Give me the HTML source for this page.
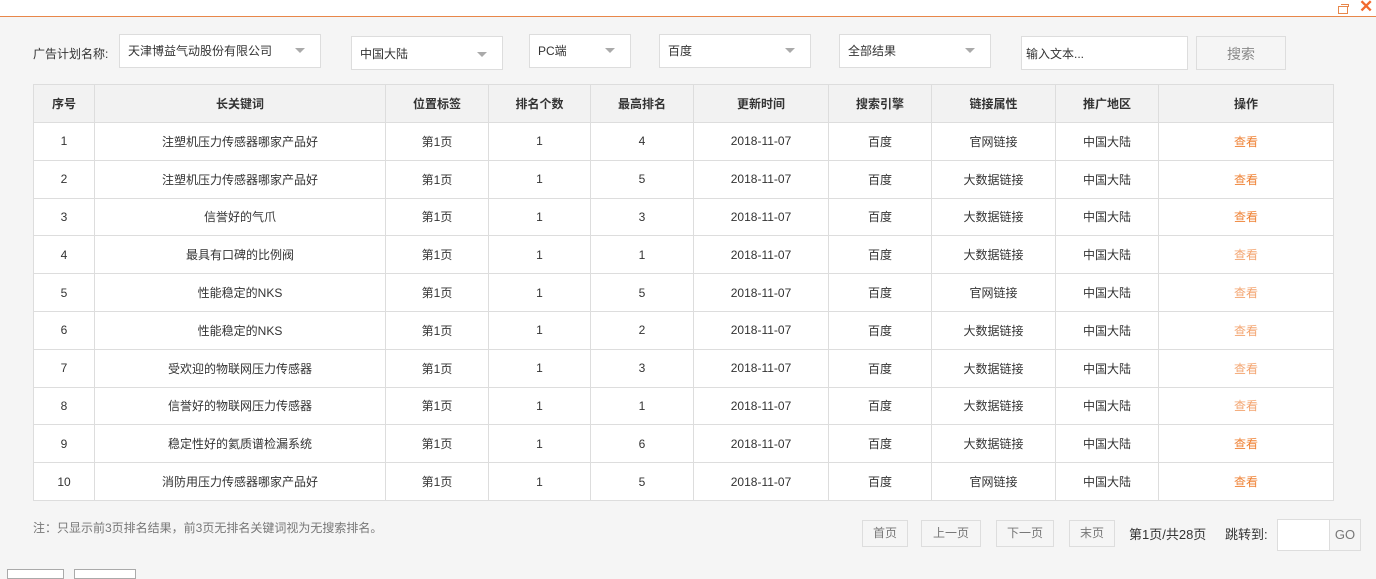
<!DOCTYPE html>
<html><head><meta charset="utf-8">
<style>
*{box-sizing:border-box;margin:0;padding:0}
body{width:1376px;height:572px;overflow:hidden;background:#f5f5f5;font-family:"Liberation Sans","Noto Sans CJK SC",sans-serif;font-size:12px;color:#333;position:relative}
.top{position:absolute;left:0;top:0;width:1376px;height:17px;background:#fff;border-bottom:1px solid #e8874a}
.ab{position:absolute}
.sel{position:absolute;background:#fff;border:1px solid #ddd;height:34px;line-height:30px;padding-left:8px;font-size:12px;color:#333}
.sel .tri{position:absolute;right:15px;top:14px;width:0;height:0;border-left:5px solid transparent;border-right:5px solid transparent;border-top:5px solid #aaa}
table{position:absolute;left:33px;top:84px;border-collapse:collapse;background:#fff;table-layout:fixed}
td,th{border:1px solid #ddd;text-align:center;height:37.8px;font-size:12px;color:#333;font-weight:normal}
th{background:#f2f2f2;font-weight:bold;height:38px}
.o{color:#ef8235}.l{color:#f3a571}
.btn{position:absolute;top:520px;height:27px;line-height:25px;border:1px solid #ddd;background:#f5f5f5;color:#777;text-align:center;font-size:12px}
</style></head><body>
<div class="top"></div>
<div class="ab" style="left:1338px;top:6px;width:10px;height:8px;border:1.5px solid #e8874a"></div>
<div class="ab" style="left:1341px;top:4px;width:8px;height:3px;border-top:1.5px solid #e8874a;border-right:1.5px solid #e8874a"></div>
<div class="ab" style="left:1359px;top:-3px;color:#f26a2e;font-size:17px;font-weight:bold">✕</div>
<div class="ab" style="left:33px;top:45px">广告计划名称:</div>
<div class="sel" style="left:119px;top:34px;width:202px;line-height:32px">天津博益气动股份有限公司<span class="tri" style="top:13px"></span></div>
<div class="sel" style="left:351px;top:36px;width:152px;line-height:34px">中国大陆<span class="tri" style="top:15px"></span></div>
<div class="sel" style="left:529px;top:34px;width:102px;line-height:32px">PC端<span class="tri" style="top:13px"></span></div>
<div class="sel" style="left:659px;top:34px;width:152px;line-height:32px">百度<span class="tri" style="top:13px"></span></div>
<div class="sel" style="left:839px;top:34px;width:152px;line-height:32px">全部结果<span class="tri" style="top:13px"></span></div>
<div class="sel" style="left:1021px;top:36px;width:167px;height:34px;padding-left:4px;line-height:34px">输入文本...</div>
<div class="ab" style="left:1196px;top:36px;width:90px;height:34px;border:1px solid #ddd;background:#f5f5f5;color:#888;font-size:14px;text-align:center;line-height:34px">搜索</div>
<table>
<colgroup><col style="width:61px"><col style="width:291px"><col style="width:103px"><col style="width:102px"><col style="width:103px"><col style="width:135px"><col style="width:103px"><col style="width:124px"><col style="width:103px"><col style="width:175px"></colgroup>
<tr><th>序号</th><th>长关键词</th><th>位置标签</th><th>排名个数</th><th>最高排名</th><th>更新时间</th><th>搜索引擎</th><th>链接属性</th><th>推广地区</th><th>操作</th></tr>
<tr><td>1</td><td>注塑机压力传感器哪家产品好</td><td>第1页</td><td>1</td><td>4</td><td>2018-11-07</td><td>百度</td><td>官网链接</td><td>中国大陆</td><td class="o">查看</td></tr>
<tr><td>2</td><td>注塑机压力传感器哪家产品好</td><td>第1页</td><td>1</td><td>5</td><td>2018-11-07</td><td>百度</td><td>大数据链接</td><td>中国大陆</td><td class="o">查看</td></tr>
<tr><td>3</td><td>信誉好的气爪</td><td>第1页</td><td>1</td><td>3</td><td>2018-11-07</td><td>百度</td><td>大数据链接</td><td>中国大陆</td><td class="o">查看</td></tr>
<tr><td>4</td><td>最具有口碑的比例阀</td><td>第1页</td><td>1</td><td>1</td><td>2018-11-07</td><td>百度</td><td>大数据链接</td><td>中国大陆</td><td class="l">查看</td></tr>
<tr><td>5</td><td>性能稳定的NKS</td><td>第1页</td><td>1</td><td>5</td><td>2018-11-07</td><td>百度</td><td>官网链接</td><td>中国大陆</td><td class="l">查看</td></tr>
<tr><td>6</td><td>性能稳定的NKS</td><td>第1页</td><td>1</td><td>2</td><td>2018-11-07</td><td>百度</td><td>大数据链接</td><td>中国大陆</td><td class="l">查看</td></tr>
<tr><td>7</td><td>受欢迎的物联网压力传感器</td><td>第1页</td><td>1</td><td>3</td><td>2018-11-07</td><td>百度</td><td>大数据链接</td><td>中国大陆</td><td class="l">查看</td></tr>
<tr><td>8</td><td>信誉好的物联网压力传感器</td><td>第1页</td><td>1</td><td>1</td><td>2018-11-07</td><td>百度</td><td>大数据链接</td><td>中国大陆</td><td class="l">查看</td></tr>
<tr><td>9</td><td>稳定性好的氦质谱检漏系统</td><td>第1页</td><td>1</td><td>6</td><td>2018-11-07</td><td>百度</td><td>大数据链接</td><td>中国大陆</td><td class="o">查看</td></tr>
<tr><td>10</td><td>消防用压力传感器哪家产品好</td><td>第1页</td><td>1</td><td>5</td><td>2018-11-07</td><td>百度</td><td>官网链接</td><td>中国大陆</td><td class="o">查看</td></tr>
</table>
<div class="ab" style="left:33px;top:519px;color:#777">注：只显示前3页排名结果，前3页无排名关键词视为无搜索排名。</div>
<div class="btn" style="left:862px;width:46px">首页</div>
<div class="btn" style="left:921px;width:60px">上一页</div>
<div class="btn" style="left:996px;width:58px">下一页</div>
<div class="btn" style="left:1069px;width:46px">末页</div>
<div class="ab" style="left:1129px;top:524px;font-size:13px;color:#333">第1页/共28页</div>
<div class="ab" style="left:1225px;top:524px;font-size:13px;color:#333">跳转到:</div>
<div class="ab" style="left:1277px;top:519px;width:84px;height:32px;border:1px solid #ddd;background:#fff"></div>
<div class="ab" style="left:1329px;top:520px;width:31px;height:30px;border-left:1px solid #ddd;background:#f5f5f5;color:#777;font-size:13px;text-align:center;line-height:30px">GO</div>
<div class="ab" style="left:7px;top:569px;width:57px;height:10px;border:1px solid #aaa;background:#fff"></div>
<div class="ab" style="left:74px;top:569px;width:62px;height:10px;border:1px solid #aaa;background:#fff"></div>
</body></html>
